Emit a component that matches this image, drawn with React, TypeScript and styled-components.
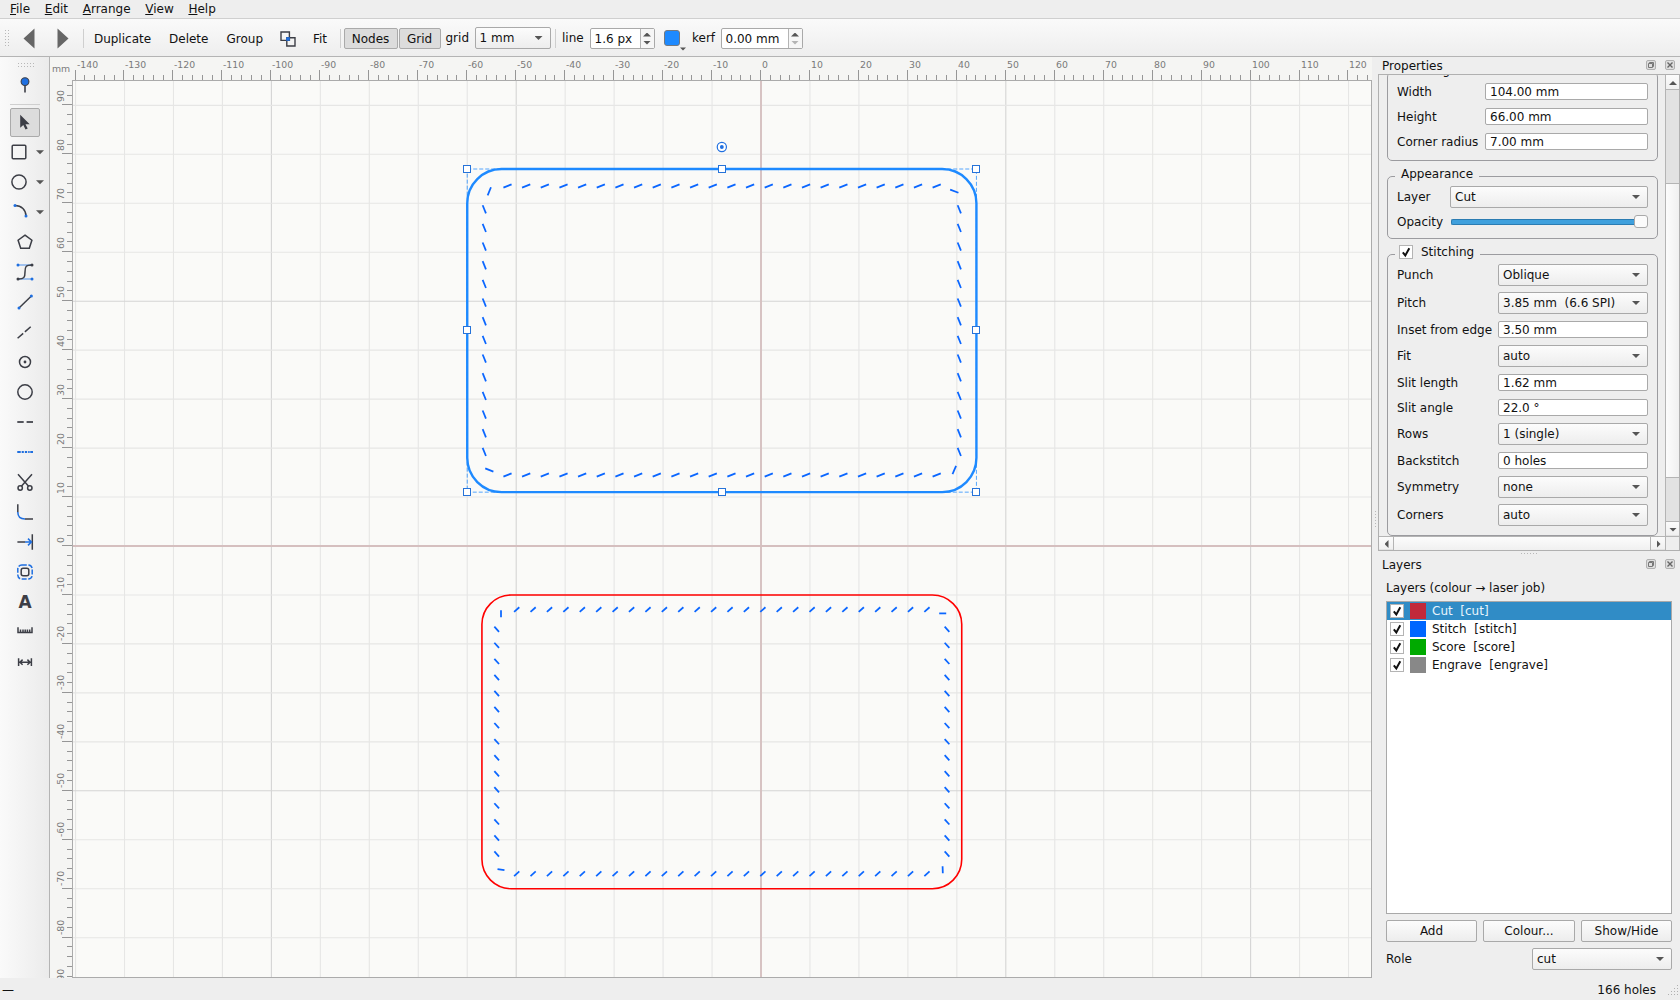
import { ReactNode } from 'react'
import styled, { createGlobalStyle, css } from 'styled-components'

const SCALE = 4.896
const ORIGIN = { x: 688, y: 465 }
const VIEW = { width: 1298, height: 896 }

const INK = '#3c3e46'
const BLUE = '#1f6fe0'

interface ISlit {
    x: number
    y: number
    angle: number
}

interface IField {
    label: string
    value: string
    kind: 'combo' | 'edit'
}

const range = (from: number, to: number, step: number): number[] => {
    const list: number[] = []
    for (let v = from; v <= to; v += step) list.push(v)
    return list
}

const wx = (v: number) => ORIGIN.x + v * SCALE
const wy = (v: number) => ORIGIN.y - v * SCALE

// slits along the four sides of a stitched rectangle, corners excluded
const sideSlits = (
    x0: number,
    dx: number,
    nx: number,
    y0: number,
    dy: number,
    ny: number,
    top: number,
    bottom: number,
    left: number,
    right: number,
    angle: number
): ISlit[] => {
    const list: ISlit[] = []
    for (let i = 0; i < nx; i++) {
        list.push({ x: x0 + i * dx, y: top, angle: -angle })
        list.push({ x: x0 + i * dx, y: bottom, angle: -angle })
    }
    for (let i = 0; i < ny; i++) {
        list.push({ x: left, y: y0 + i * dy, angle: 90 - angle })
        list.push({ x: right, y: y0 + i * dy, angle: 90 - angle })
    }
    return list
}

const outerSlits: ISlit[] = [
    ...sideSlits(434.5, 18.66, 24, 128.3, 18.66, 14, 105, 394, 411.3, 886.3, 22),
    { x: 416.3, y: 110.3, angle: -68 },
    { x: 881.3, y: 110.2, angle: 20 },
    { x: 416.3, y: 389, angle: 22 },
    { x: 881.3, y: 389, angle: -66 },
]

const innerSlits: ISlit[] = [
    ...sideSlits(443.7, 16.41, 26, 548.3, 16.05, 15, 528.6, 792.8, 423.7, 874, 42),
    { x: 428, y: 532.7, angle: 90 },
    { x: 869.7, y: 532.4, angle: 0 },
    { x: 428, y: 788.7, angle: 8 },
    { x: 869.7, y: 788.8, angle: 88 },
]

const geometryFields: IField[] = [
    { label: 'Width', value: '104.00 mm', kind: 'edit' },
    { label: 'Height', value: '66.00 mm', kind: 'edit' },
    { label: 'Corner radius', value: '7.00 mm', kind: 'edit' },
]

const stitchingFields: IField[] = [
    { label: 'Punch', value: 'Oblique', kind: 'combo' },
    { label: 'Pitch', value: '3.85 mm  (6.6 SPI)', kind: 'combo' },
    { label: 'Inset from edge', value: '3.50 mm', kind: 'edit' },
    { label: 'Fit', value: 'auto', kind: 'combo' },
    { label: 'Slit length', value: '1.62 mm', kind: 'edit' },
    { label: 'Slit angle', value: '22.0 °', kind: 'edit' },
    { label: 'Rows', value: '1 (single)', kind: 'combo' },
    { label: 'Backstitch', value: '0 holes', kind: 'edit' },
    { label: 'Symmetry', value: 'none', kind: 'combo' },
    { label: 'Corners', value: 'auto', kind: 'combo' },
]

const layers = [
    { name: 'Cut', role: 'cut', color: '#c1293a' },
    { name: 'Stitch', role: 'stitch', color: '#0066ff' },
    { name: 'Score', role: 'score', color: '#00aa00' },
    { name: 'Engrave', role: 'engrave', color: '#888888' },
]

const tools: { name: string; menu?: boolean; icon: ReactNode }[] = [
    {
        name: 'select',
        icon: (
            <path
                d="M20.2 7.8v13l3.1-2.7 2.2 4.5 2.2-1-2.2-4.4h4.2z"
                fill={INK}
                stroke="none"
            />
        ),
    },
    {
        name: 'rectangle',
        menu: true,
        icon: <rect x="12.2" y="8.2" width="13.6" height="13.6" rx="1" />,
    },
    { name: 'ellipse', menu: true, icon: <circle cx="19" cy="15" r="7.1" /> },
    {
        name: 'arc',
        menu: true,
        icon: (
            <>
                <path d="M15 8.4C21.5 8.4 26 13 26 19" />
                <Dot x={15} y={8.4} />
                <Dot x={26} y={19} />
            </>
        ),
    },
    {
        name: 'polygon',
        icon: <path d="M25 8.2l6.9 5-2.6 8h-8.6l-2.6-8z" />,
    },
    {
        name: 'bezier',
        icon: (
            <>
                <path d="M18 8h14M18 22h14" stroke="#86b2ee" />
                <path d="M18 22C24.5 22 25 20 25 15S25.5 8 32 8" />
                <Dot x={18} y={8} />
                <Dot x={32} y={22} />
                <Dot x={32} y={8} fill={INK} />
                <Dot x={18} y={22} fill={INK} />
            </>
        ),
    },
    {
        name: 'line',
        icon: (
            <>
                <path d="M19 21L31.4 9" />
                <Dot x={19} y={21} />
                <Dot x={31.4} y={9} />
            </>
        ),
    },
    {
        name: 'guide',
        icon: <path d="M17.6 21.3l5.6-4.9M24.9 14.9l5.8-5.2" />,
    },
    {
        name: 'punch',
        icon: (
            <>
                <circle cx="25" cy="15" r="5.5" />
                <circle cx="25" cy="15" r="1.4" fill={INK} stroke="none" />
            </>
        ),
    },
    { name: 'hole', icon: <circle cx="25" cy="15" r="7.2" /> },
    {
        name: 'stitch',
        icon: (
            <path
                d="M17.3 15h6.4M26.6 15H33"
                stroke="#54565d"
                strokeWidth="1.8"
            />
        ),
    },
    {
        name: 'stitchPath',
        icon: (
            <>
                <path d="M17.3 15H33" strokeWidth="1" stroke="#b9c9e2" />
                <path
                    d="M17.3 15h3.4M21.8 15h2M25 15h2M28.2 15h1.4M30.3 15H33"
                    stroke={BLUE}
                    strokeWidth="2.2"
                />
            </>
        ),
    },
    {
        name: 'scissors',
        icon: (
            <>
                <path d="M18 7.3l10.6 11.9M32 7.3L21.4 19.2" />
                <circle cx="20.2" cy="21" r="2.2" />
                <circle cx="29.8" cy="21" r="2.2" />
            </>
        ),
    },
    {
        name: 'fillet',
        icon: (
            <>
                <path d="M17.8 7.3v8M25 22h8" />
                <path d="M17.8 15c0 4.6 2.6 7 7.2 7" stroke={BLUE} />
            </>
        ),
    },
    {
        name: 'extend',
        icon: (
            <>
                <path d="M17.4 15H25M32.3 7.2v15.5" />
                <path d="M25 15h6.2M28 11.6l3.4 3.4-3.4 3.4" stroke={BLUE} />
            </>
        ),
    },
    {
        name: 'offset',
        icon: (
            <>
                <rect
                    x="17.8"
                    y="7.9"
                    width="14.4"
                    height="14.2"
                    rx="4"
                    stroke={BLUE}
                    strokeDasharray="5 1.6"
                />
                <rect x="21.2" y="11.2" width="7.6" height="7.6" rx="2" />
            </>
        ),
    },
    {
        name: 'text',
        icon: (
            <text
                x="25"
                y="20.9"
                textAnchor="middle"
                fontSize="17"
                fontWeight="700"
                fill={INK}
                stroke="none"
            >
                A
            </text>
        ),
    },
    {
        name: 'measure',
        icon: (
            <path d="M18 10.2v5.3h14v-5.3M20.5 15v-2.6M23 15v-2.6M25.2 15v-2.6M27.4 15v-2.6M29.7 15v-2.6" />
        ),
    },
    {
        name: 'dimension',
        icon: (
            <path d="M18.6 11.3V19M31.4 11.3V19M19 15.2h12M22.6 12.6L20 15.2l2.6 2.6M27.4 12.6l2.6 2.6-2.6 2.6" />
        ),
    },
]

function Dot({ x, y, fill = BLUE }: { x: number; y: number; fill?: string }) {
    return <circle cx={x} cy={y} r="1.5" fill={fill} stroke="none" />
}

function CheckMark() {
    return (
        <CheckBox>
            <svg width="12" height="12" viewBox="0 0 12 12">
                <path
                    d="M2.8 6.4l2.5 3 4-7.2"
                    fill="none"
                    stroke="#111"
                    strokeWidth="2"
                />
            </svg>
        </CheckBox>
    )
}

function DockButtons() {
    return (
        <DockControls>
            <DockButton>
                <svg width="8" height="8" viewBox="0 0 8 8">
                    <path
                        d="M2.5 2.5V1.5h4v4h-1M1.5 2.5h4v4h-4z"
                        fill="none"
                        stroke="#777"
                    />
                </svg>
            </DockButton>
            <DockButton>
                <svg width="8" height="8" viewBox="0 0 8 8">
                    <path
                        d="M1.5 1.5l5 5M6.5 1.5l-5 5"
                        fill="none"
                        stroke="#666"
                        strokeWidth="1.4"
                    />
                </svg>
            </DockButton>
        </DockControls>
    )
}

function Field({ field, width }: { field: IField; width: number }) {
    if (field.kind === 'edit') {
        return (
            <FieldRow $height={19} $low>
                <span>{field.label}</span>
                <Edit $width={width}>{field.value}</Edit>
            </FieldRow>
        )
    }
    return (
        <FieldRow $height={22}>
            <span>{field.label}</span>
            <Combo $width={width}>
                {field.value}
                <Arrow $dir="down" />
            </Combo>
        </FieldRow>
    )
}

function Slits({ slits, length }: { slits: ISlit[]; length: number }) {
    return (
        <g stroke="#0a66ff" strokeWidth="1.75">
            {slits.map((slit, i) => (
                <line
                    key={i}
                    x1={-length / 2}
                    x2={length / 2}
                    transform={`translate(${slit.x} ${slit.y}) rotate(${slit.angle})`}
                />
            ))}
        </g>
    )
}

function Drawing() {
    const left = wx(-60)
    const right = wx(44)
    const top = wy(77)
    const bottom = wy(11)
    const cx = (left + right) / 2
    const cy = (top + bottom) / 2
    const handles = [
        [left, top],
        [cx, top],
        [right, top],
        [left, cy],
        [right, cy],
        [left, bottom],
        [cx, bottom],
        [right, bottom],
    ]

    return (
        <svg width={VIEW.width} height={VIEW.height}>
            {range(-140, 120, 10).map((v) => (
                <line
                    key={v}
                    x1={wx(v)}
                    x2={wx(v)}
                    y2={VIEW.height}
                    stroke={v % 50 === 0 ? '#d4d4d4' : '#e6e6e5'}
                    strokeWidth="1.1"
                />
            ))}
            {range(-80, 90, 10).map((v) => (
                <line
                    key={v}
                    y1={wy(v)}
                    y2={wy(v)}
                    x2={VIEW.width}
                    stroke={v % 50 === 0 ? '#d4d4d4' : '#e6e6e5'}
                    strokeWidth="1.1"
                />
            ))}
            <path
                d={`M0 ${ORIGIN.y}H${VIEW.width}M${ORIGIN.x} 0V${VIEW.height}`}
                stroke="#d5bfbf"
                strokeWidth="1.8"
            />

            <rect
                x={wx(-57)}
                y={wy(-10)}
                width={98 * SCALE}
                height={60 * SCALE}
                rx={6 * SCALE}
                fill="none"
                stroke="#ff0000"
                strokeWidth="1.6"
            />
            <Slits slits={innerSlits} length={7} />

            <rect
                x={left}
                y={top}
                width={right - left}
                height={bottom - top}
                rx={7 * SCALE}
                fill="none"
                stroke="#1e8aff"
                strokeWidth="2.4"
            />
            <Slits slits={outerSlits} length={8.8} />
            <rect
                x={left}
                y={top}
                width={right - left}
                height={bottom - top}
                fill="none"
                stroke="#1e8aff"
                strokeOpacity="0.75"
                strokeDasharray="4 2"
            />
            {handles.map(([x, y], i) => (
                <rect
                    key={i}
                    x={Math.round(x) - 3.5}
                    y={Math.floor(y) - 3.5}
                    width="7"
                    height="7"
                    fill="#fff"
                    stroke="#2673d9"
                />
            ))}
            <circle
                cx={cx}
                cy="66"
                r="4.6"
                fill="#fff"
                stroke={BLUE}
                strokeWidth="1.2"
            />
            <circle cx={cx} cy="66" r="1.9" fill={BLUE} />
        </svg>
    )
}

function HorizontalRuler() {
    return (
        <svg width="1321" height="23">
            {range(-140, 124, 2).map((v) => {
                const x = Math.floor(710.45 + v * SCALE) + 0.5
                return (
                    <line
                        key={v}
                        x1={x}
                        x2={x}
                        y1={v % 10 === 0 ? 13 : 18}
                        y2="23"
                        stroke="#969696"
                    />
                )
            })}
            {range(-140, 120, 10).map((v) => (
                <RulerText
                    key={v}
                    x={Math.floor(710.45 + v * SCALE) + 2}
                    y="11"
                >
                    {v}
                </RulerText>
            ))}
            <RulerText x="2" y="15">
                mm
            </RulerText>
        </svg>
    )
}

function VerticalRuler() {
    return (
        <svg width="22" height="897">
            {range(-88, 94, 2).map((v) => {
                const y = Math.floor(464.5 - v * SCALE) + 0.5
                return (
                    <line
                        key={v}
                        x1={v % 10 === 0 ? 12 : 17}
                        x2="22"
                        y1={y}
                        y2={y}
                        stroke="#969696"
                    />
                )
            })}
            {range(-90, 90, 10).map((v) => (
                <RulerText
                    key={v}
                    transform={`translate(14 ${
                        Math.floor(464.5 - v * SCALE) - 2
                    }) rotate(-90)`}
                >
                    {v}
                </RulerText>
            ))}
        </svg>
    )
}

export default function App() {
    return (
        <Window>
            <GlobalStyle />
            <MenuBar>
                {['File', 'Edit', 'Arrange', 'View', 'Help'].map((item) => (
                    <span key={item}>
                        <u>{item[0]}</u>
                        {item.slice(1)}
                    </span>
                ))}
            </MenuBar>

            <Toolbar>
                <Grip $width={5} $height={17} />
                <HistoryArrows>
                    <svg width="46" height="21" viewBox="0 0 46 21">
                        <path
                            d="M11.5 .5v20L.5 10.5zM34.5 .5v20l11-10z"
                            fill="#666"
                        />
                    </svg>
                </HistoryArrows>
                <Separator $before={14} />
                <ToolButton $width={75} $before={1.5}>
                    Duplicate
                </ToolButton>
                <ToolButton $width={57.5}>Delete</ToolButton>
                <ToolButton $width={54.5}>Group</ToolButton>
                <ToolButton $width={31}>
                    <svg width="16" height="16" viewBox="0 0 16 16">
                        <path
                            d="M1 1h8.4v8.4H1zM6.8 6.8h8.2v8.2H6.8z"
                            fill="none"
                            stroke={INK}
                            strokeWidth="1.4"
                        />
                        <path d="M6.2 6.2h3.6v3.6H6.2z" fill={BLUE} />
                    </svg>
                </ToolButton>
                <ToolButton $width={34}>Fit</ToolButton>
                <Separator $before={2.5} />
                <ToolButton $width={54} $before={3} $pressed>
                    Nodes
                </ToolButton>
                <ToolButton $width={42} $before={1} $pressed>
                    Grid
                </ToolButton>
                <ToolLabel $width={29} $before={5}>
                    grid
                </ToolLabel>
                <GridCombo $width={76}>
                    1 mm
                    <Arrow $dir="down" />
                </GridCombo>
                <Separator $before={4} />
                <ToolLabel $width={27.5} $before={6.5}>
                    line
                </ToolLabel>
                <Spin $width={65}>
                    1.6 px
                    <SpinArrows>
                        <Arrow $dir="up" />
                        <Arrow $dir="down" />
                    </SpinArrows>
                </Spin>
                <ColorButton>
                    <svg width="24" height="21" viewBox="0 0 24 21">
                        <rect
                            x=".5"
                            y=".5"
                            width="15"
                            height="15"
                            rx="2.5"
                            fill="#1e8aff"
                            stroke="#75797f"
                        />
                        <path d="M16 17.5h6l-3 3z" fill="#555" />
                    </svg>
                </ColorButton>
                <ToolLabel $width={28.5} $before={4.5}>
                    kerf
                </ToolLabel>
                <Spin $width={82}>
                    0.00 mm
                    <SpinArrows>
                        <Arrow $dir="up" />
                        <Arrow $dir="down" $disabled />
                    </SpinArrows>
                </Spin>
            </Toolbar>

            <Body>
                <ToolColumn>
                    <ToolGrip $width={17} $height={5} />
                    <PinTool>
                        <svg width="10" height="16" viewBox="0 0 10 16">
                            <path d="M5 8v7.6" stroke={INK} strokeWidth="1.6" />
                            <circle
                                cx="5"
                                cy="4.6"
                                r="3.9"
                                fill={BLUE}
                                stroke={INK}
                                strokeWidth="1.1"
                            />
                        </svg>
                    </PinTool>
                    {tools.map((tool) => (
                        <ToolCell key={tool.name} $active={tool.name === 'select'}>
                            <svg
                                width="50"
                                height="30"
                                viewBox="0 0 50 30"
                                fill="none"
                                stroke={INK}
                                strokeWidth="1.5"
                            >
                                {tool.icon}
                                {tool.menu && (
                                    <path
                                        d="M36 13.2h8l-4 4z"
                                        fill="#555"
                                        stroke="none"
                                    />
                                )}
                            </svg>
                        </ToolCell>
                    ))}
                </ToolColumn>

                <Workspace>
                    <TopRuler>
                        <HorizontalRuler />
                    </TopRuler>
                    <SideRuler>
                        <VerticalRuler />
                    </SideRuler>
                    <Canvas>
                        <Drawing />
                    </Canvas>
                </Workspace>

                <SplitHandle>
                    <Grip $width={2} $height={17} />
                </SplitHandle>

                <Docks>
                    <DockTitle>
                        Properties
                        <DockButtons />
                    </DockTitle>
                    <ScrollArea>
                        <Viewport>
                            <Group>
                                <GroupTitle>Rectangle</GroupTitle>
                                {geometryFields.map((field) => (
                                    <Field
                                        key={field.label}
                                        field={field}
                                        width={163}
                                    />
                                ))}
                            </Group>
                            <Group>
                                <GroupTitle>Appearance</GroupTitle>
                                <Field
                                    field={{
                                        label: 'Layer',
                                        value: 'Cut',
                                        kind: 'combo',
                                    }}
                                    width={198}
                                />
                                <FieldRow $height={15} $low>
                                    <span>Opacity</span>
                                    <Slider>
                                        <i />
                                        <b />
                                    </Slider>
                                </FieldRow>
                            </Group>
                            <Group>
                                <GroupTitle $checkable>
                                    <CheckMark />
                                    Stitching
                                </GroupTitle>
                                {stitchingFields.map((field) => (
                                    <Field
                                        key={field.label}
                                        field={field}
                                        width={150}
                                    />
                                ))}
                            </Group>
                        </Viewport>
                        <VerticalBar>
                            <BarButton>
                                <Arrow $dir="up" />
                            </BarButton>
                            <VerticalThumb />
                            <BarButton>
                                <Arrow $dir="down" />
                            </BarButton>
                        </VerticalBar>
                        <HorizontalBar>
                            <BarButton>
                                <Arrow $dir="left" />
                            </BarButton>
                            <HorizontalThumb />
                            <BarButton>
                                <Arrow $dir="right" />
                            </BarButton>
                        </HorizontalBar>
                        <BarCorner />
                    </ScrollArea>
                    <DockSplit>
                        <Grip $width={17} $height={2} />
                    </DockSplit>
                    <DockTitle>
                        Layers
                        <DockButtons />
                    </DockTitle>
                    <LayersPanel>
                        <ListCaption>Layers (colour → laser job)</ListCaption>
                        <LayerList>
                            {layers.map((layer, i) => (
                                <LayerRow key={layer.name} $selected={i === 0}>
                                    <CheckMark />
                                    <Swatch $color={layer.color} />
                                    {`${layer.name}  [${layer.role}]`}
                                </LayerRow>
                            ))}
                        </LayerList>
                        <ButtonRow>
                            <PushButton>Add</PushButton>
                            <PushButton>Colour...</PushButton>
                            <PushButton>Show/Hide</PushButton>
                        </ButtonRow>
                        <RoleRow>
                            <span>Role</span>
                            <Combo $width={140}>
                                cut
                                <Arrow $dir="down" />
                            </Combo>
                        </RoleRow>
                    </LayersPanel>
                </Docks>
            </Body>

            <StatusBar>
                <span>—</span>
                <HoleCount>166 holes</HoleCount>
                <svg width="12" height="12" viewBox="0 0 12 12" fill="#b0b0b0">
                    {[0, 1, 2, 3].map((row) =>
                        range(3 - row, 3, 1).map((col) => (
                            <rect
                                key={`${row}-${col}`}
                                x={col * 3 + 1}
                                y={row * 3 + 1}
                                width="1"
                                height="1"
                            />
                        ))
                    )}
                </svg>
            </StatusBar>
        </Window>
    )
}

const GlobalStyle = createGlobalStyle`
    * {
        box-sizing: border-box;
    }

    body {
        margin: 0;
        overflow: hidden;
        background: #eeeeee;
        color: #111;
        font-family: 'DejaVu Sans', sans-serif;
        font-size: 12px;
        white-space: pre;
    }

    svg {
        display: block;
        flex-shrink: 0;
    }
`

const raised = css`
    border: 1px solid #a9a9a9;
    border-radius: 2px;
    background: linear-gradient(#fcfcfc, #ededed);
`

const Window = styled.div`
    display: grid;
    grid-template-rows: 19px 38px 921px 22px;
    width: 1680px;
    height: 1000px;
`

const MenuBar = styled.div`
    display: flex;
    gap: 14.7px;
    padding-left: 10px;
    line-height: 18px;
    border-bottom: 1px solid #cfcfcf;

    u {
        text-underline-offset: 1px;
    }
`

const Toolbar = styled.div`
    display: flex;
    align-items: center;
    padding: 2px 0 0 5px;
    border-bottom: 1px solid #b4b4b4;
    background: linear-gradient(#fafafa, #eeeeee);
`

const Grip = styled.div<{ $width: number; $height: number }>`
    flex-shrink: 0;
    width: ${({ $width }) => $width}px;
    height: ${({ $height }) => $height}px;
    background: conic-gradient(from 270deg at 1px 1px, #b8b8b8 90deg, transparent 0)
        0 0 / 3px 3px;
`

const HistoryArrows = styled.div`
    margin-left: 12.5px;
`

const Separator = styled.div<{ $before: number }>`
    width: 1px;
    height: 19px;
    margin-left: ${({ $before }) => $before}px;
    background: #cfcfcf;
`

const ToolButton = styled.div<{
    $width: number
    $before?: number
    $pressed?: boolean
}>`
    display: flex;
    align-items: center;
    justify-content: center;
    width: ${({ $width }) => $width}px;
    height: 21px;
    margin-left: ${({ $before = 0 }) => $before}px;

    ${({ $pressed }) =>
        $pressed &&
        css`
            border: 1px solid #aaaaaa;
            border-radius: 2px;
            background: #dcdcdc;
        `}
`

const ToolLabel = styled.div<{ $width: number; $before: number }>`
    width: ${({ $width }) => $width}px;
    margin-left: ${({ $before }) => $before}px;
    line-height: 15px;
`

const Arrow = styled.i<{
    $dir: 'up' | 'down' | 'left' | 'right'
    $disabled?: boolean
}>`
    flex-shrink: 0;
    background: ${({ $disabled }) => ($disabled ? '#b4b4b4' : '#555')};

    ${({ $dir }) =>
        $dir === 'up' || $dir === 'down'
            ? css`
                  width: 8px;
                  height: 4px;
              `
            : css`
                  width: 4px;
                  height: 8px;
              `}

    clip-path: ${({ $dir }) =>
        ({
            up: 'polygon(0 100%, 50% 0, 100% 100%)',
            down: 'polygon(0 0, 100% 0, 50% 100%)',
            left: 'polygon(100% 0, 100% 100%, 0 50%)',
            right: 'polygon(0 0, 100% 50%, 0 100%)',
        }[$dir])};
`

const Combo = styled.div<{ $width: number }>`
    ${raised}
    display: flex;
    align-items: center;
    justify-content: space-between;
    width: ${({ $width }) => $width}px;
    height: 22px;
    padding: 0 7px 0 4px;
`

const GridCombo = styled(Combo)`
    margin-bottom: 1px;
`

const Edit = styled.div<{ $width: number }>`
    width: ${({ $width }) => $width}px;
    height: 17px;
    padding-left: 4px;
    border: 1px solid #a9a9a9;
    border-radius: 2px;
    background: #fff;
    line-height: 16px;
`

const Spin = styled.div<{ $width: number }>`
    display: flex;
    justify-content: space-between;
    width: ${({ $width }) => $width}px;
    height: 21px;
    padding-left: 4px;
    border: 1px solid #a9a9a9;
    border-radius: 2px;
    background: #fff;
    line-height: 20px;
`

const SpinArrows = styled.div`
    display: flex;
    flex-direction: column;
    align-items: center;
    justify-content: center;
    gap: 4px;
    width: 14px;
    border-left: 1px solid #b4b4b4;
    background: #f6f6f6;
`

const ColorButton = styled.div`
    margin: 4px 0 0 9px;
`

const Body = styled.div`
    display: grid;
    grid-template-columns: 50px 1322px 6px 302px;
`

const ToolColumn = styled.div`
    display: flex;
    flex-direction: column;
    align-items: center;
    padding-top: 6px;
    border-right: 1px solid #b4b4b4;
    background: linear-gradient(90deg, #fafafa, #ebebeb);
`

const ToolGrip = styled(Grip)`
    margin-left: 3px;
`

const PinTool = styled.div`
    display: flex;
    justify-content: center;
    width: 30px;
    height: 37px;
    margin: 0 0 2px 1px;
    padding-top: 9px;
    border-bottom: 1px solid #cfcfcf;
`

const ToolCell = styled.div<{ $active: boolean }>`
    display: flex;
    justify-content: center;
    width: 30px;
    height: 30px;
    margin-left: 1px;

    ${({ $active }) =>
        $active &&
        css`
            height: 29px;
            margin-top: 1px;
            background: #dcdcdc;
            border: 1px solid #aaaaaa;
            border-radius: 2px;

            svg {
                margin-top: -2px;
            }
        `}
`

const Workspace = styled.div`
    display: grid;
    grid-template: 24px 897px / 23px 1299px;
    background: #f5f5f3;
`

const TopRuler = styled.div`
    grid-column: 1 / 3;
    background: linear-gradient(#ababab, #ababab) 22px 23px / 100% 1px no-repeat;
`

const SideRuler = styled.div`
    overflow: hidden;
    border-right: 1px solid #ababab;
`

const Canvas = styled.div`
    overflow: hidden;
    border: solid #ababab;
    border-width: 0 1px 1px 0;
    background: #fafaf8;
`

const RulerText = styled.text`
    font-size: 9.33px;
    fill: #7a7a7a;
`

const SplitHandle = styled.div`
    padding: 454px 0 0 3px;
`

const Docks = styled.div`
    display: flex;
    flex-direction: column;
`

const DockTitle = styled.div`
    display: flex;
    align-items: center;
    justify-content: space-between;
    height: 17px;
    padding: 1px 5px 0 4px;
    line-height: 16px;
`

const DockControls = styled.div`
    display: flex;
    gap: 9px;
    margin-bottom: 2px;
`

const DockButton = styled.div`
    width: 10px;
    height: 10px;
    border: 1px solid #b0b0b0;
    border-radius: 2px;
    background: #dedede;
`

const ScrollArea = styled.div`
    display: grid;
    grid-template: 461px 14px / 286px 14px;
    border: 1px solid #b0b0b0;
`

const Viewport = styled.div`
    display: flex;
    flex-direction: column;
    gap: 15px;
    overflow: hidden;
    padding: 0 7px 0 8px;

    > :first-child {
        margin-top: -3px;
    }
`

const Group = styled.div`
    display: flex;
    flex-direction: column;
    flex-shrink: 0;
    gap: 6px;
    position: relative;
    padding: 9px;
    border: 1px solid #9b9b9f;
    border-radius: 5px;
`

// sits on top of the frame line
const GroupTitle = styled.div<{ $checkable?: boolean }>`
    display: flex;
    align-items: center;
    gap: 8px;
    position: absolute;
    top: -11px;
    left: 7px;
    height: 16px;
    padding: 0 6px 0 ${({ $checkable }) => ($checkable ? 4 : 6)}px;
    background: #eeeeee;
`

const FieldRow = styled.div<{ $height: number; $low?: boolean }>`
    display: flex;
    align-items: center;
    justify-content: space-between;
    height: ${({ $height }) => $height}px;
    line-height: 15px;

    ${({ $low }) =>
        $low &&
        css`
            span {
                padding-top: 1px;
                line-height: 16px;
            }
        `}
`

const Slider = styled.div`
    display: flex;
    align-items: center;
    width: 197px;
    height: 15px;

    i {
        flex: 1;
        height: 6px;
        margin-top: 1px;
        border: 1px solid #2b7cb2;
        border-right: 0;
        border-radius: 2px 0 0 2px;
        background: #3fa0dd;
    }

    b {
        width: 14px;
        height: 13px;
        border: 1px solid #a9a9a9;
        border-radius: 3px;
        background: #fbfbfb;
    }
`

const CheckBox = styled.div`
    flex-shrink: 0;
    width: 14px;
    height: 14px;
    border: 1px solid #b4b4b4;
    background: #fff;
`

const VerticalBar = styled.div`
    display: grid;
    grid-template-rows: 15px 1fr 14px;
    border-left: 1px solid #b4b4b4;
    background: linear-gradient(#b4b4b4, #b4b4b4) 0 14px / 100% 1px no-repeat,
        linear-gradient(#b4b4b4, #b4b4b4) 0 446px / 100% 1px no-repeat, #e2e2e2;
`

const HorizontalBar = styled.div`
    display: grid;
    grid-template-columns: 14px 1fr 14px;
    border-top: 1px solid #b4b4b4;
    background: #e2e2e2;
`

const BarButton = styled.div`
    display: flex;
    align-items: center;
    justify-content: center;
    margin-bottom: 1px;
    padding: 2px 0 0 1px;
    background: linear-gradient(#fbfbfb, #f0f0f0);
`

const VerticalThumb = styled.div`
    margin: 93px 0 44px;
    border: solid #b4b4b4;
    border-width: 1px 0;
    background: linear-gradient(90deg, #fcfcfc, #f0f0f0);
`

const HorizontalThumb = styled.div`
    border: solid #b4b4b4;
    border-width: 0 1px;
    background: linear-gradient(#fcfcfc, #f0f0f0);
`

const BarCorner = styled.div`
    border: solid #b4b4b4;
    border-width: 1px 0 0 1px;
`

const DockSplit = styled.div`
    display: flex;
    justify-content: center;
    height: 5px;
    padding: 2px 0 0 1px;
`

const LayersPanel = styled.div`
    padding: 8px 8px 0;
`

const ListCaption = styled.div`
    height: 20px;
    line-height: 15px;
`

const LayerList = styled.div`
    height: 313px;
    margin-bottom: 6px;
    border: 1px solid #a9a9a9;
    background: #fff;
`

const LayerRow = styled.div<{ $selected: boolean }>`
    display: flex;
    align-items: center;
    height: 18px;
    padding-left: 3px;
    background: ${({ $selected }) => ($selected ? '#308cc6' : '#fff')};
    color: ${({ $selected }) => ($selected ? '#e8f4fc' : '#111')};
`

const Swatch = styled.div<{ $color: string }>`
    width: 16px;
    height: 16px;
    margin: 0 6px;
    background: ${({ $color }) => $color};
`

const ButtonRow = styled.div`
    display: grid;
    grid-template-columns: 91px 92px 91px;
    gap: 6px;
`

const PushButton = styled.div`
    ${raised}
    height: 22px;
    line-height: 20px;
    text-align: center;
`

const RoleRow = styled.div`
    display: flex;
    align-items: center;
    justify-content: space-between;
    margin-top: 6px;
`

const StatusBar = styled.div`
    display: flex;
    align-items: center;
    padding: 2px 1px 0 2px;
`

const HoleCount = styled.span`
    margin: 0 11px 0 auto;
`
